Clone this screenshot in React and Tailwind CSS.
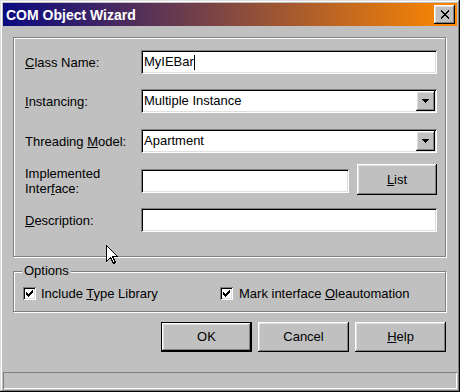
import React from "react";

const sunken =
  "shadow-[inset_1px_1px_0_#808080,inset_-1px_-1px_0_#ffffff,inset_2px_2px_0_#000000,inset_-2px_-2px_0_#dfdfdf]";
const raised =
  "shadow-[inset_-1px_-1px_0_#000000,inset_1px_1px_0_#ffffff,inset_-2px_-2px_0_#808080,inset_2px_2px_0_#dfdfdf]";
const etched = "border border-[#808080] shadow-[inset_1px_1px_0_#ffffff,1px_1px_0_#ffffff]";

const CHECK = [
  "......X",
  ".....XX",
  "X...XXX",
  "XX.XXX.",
  "XXXXX..",
  ".XXX...",
  "..X....",
];

function CheckMark() {
  const rects = [];
  CHECK.forEach((row, y) =>
    row.split("").forEach((c, x) => {
      if (c === "X") rects.push(<rect key={`${x}-${y}`} x={x} y={y} width="1" height="1" fill="#000" />);
    })
  );
  return (
    <svg width="7" height="7" viewBox="0 0 7 7" shapeRendering="crispEdges">
      {rects}
    </svg>
  );
}

function Checkbox() {
  return (
    <div className={`w-[13px] h-[13px] bg-white flex items-center justify-center shrink-0 ${sunken}`}>
      <CheckMark />
    </div>
  );
}

function Combo({ value }) {
  return (
    <div className={`w-[296px] h-[24px] bg-white flex items-center pl-[3px] ${sunken}`}>
      <span className="flex-1">{value}</span>
      <div className={`w-[19px] h-[20px] mr-[2px] bg-[#c0c0c0] flex items-center justify-center ${raised}`}>
        <svg width="7" height="4" viewBox="0 0 7 4" shapeRendering="crispEdges">
          <polygon points="0,0 7,0 3.5,4" fill="#000" />
        </svg>
      </div>
    </div>
  );
}

function Label({ children }) {
  return <div className="w-[116px] shrink-0 leading-[15px]">{children}</div>;
}

export default function App() {
  return (
    <div className="w-[460px] h-[392px] bg-[#c0c0c0] p-[3px] flex flex-col relative font-['Liberation_Sans',Arial,sans-serif] text-[13px] text-black shadow-[inset_-1px_-1px_0_#000000,inset_1px_1px_0_#dfdfdf,inset_-2px_-2px_0_#808080,inset_2px_2px_0_#ffffff]">
      {/* Title bar */}
      <div className="h-[23px] flex items-center pl-[3px] pr-[2px] bg-[linear-gradient(to_right,#0a0a80,#ff8800)]">
        <span className="flex-1 text-white font-bold text-[14px] leading-none">COM Object Wizard</span>
        <div className={`w-[21px] h-[19px] bg-[#c0c0c0] flex items-center justify-center ${raised}`}>
          <svg width="10" height="9" viewBox="0 0 10 9" shapeRendering="crispEdges">
            <path d="M1 0.5 L9 8.5 M9 0.5 L1 8.5" stroke="#000" strokeWidth="2" />
          </svg>
        </div>
      </div>

      {/* Main group */}
      <div className={`mt-[11px] ml-[10px] w-[433px] h-[220px] ${etched} flex flex-col pt-[12px] pl-[11px]`}>
        <div className="flex items-center h-[24px]">
          <Label>
            <u>C</u>lass Name:
          </Label>
          <div className={`w-[296px] h-[24px] bg-white flex items-center pl-[3px] ${sunken}`}>
            <span>MyIEBar</span>
            <span className="inline-block w-[1px] h-[15px] bg-black" />
          </div>
        </div>
        <div className="flex items-center h-[24px] mt-[15px]">
          <Label>
            <u>I</u>nstancing:
          </Label>
          <Combo value="Multiple Instance" />
        </div>
        <div className="flex items-center h-[24px] mt-[16px]">
          <Label>
            Threading <u>M</u>odel:
          </Label>
          <Combo value="Apartment" />
        </div>
        <div className="flex items-center h-[24px] mt-[16px]">
          <Label>
            Implemented
            <br />
            Inter<u>f</u>ace:
          </Label>
          <div className={`w-[208px] h-[24px] bg-white ${sunken}`} />
          <div
            className={`ml-[8px] w-[80px] h-[31px] self-start -mt-[5px] bg-[#c0c0c0] flex items-center justify-center ${raised}`}
          >
            <span>
              <u>L</u>ist
            </span>
          </div>
        </div>
        <div className="flex items-center h-[24px] mt-[15px]">
          <Label>
            <u>D</u>escription:
          </Label>
          <div className={`w-[296px] h-[24px] bg-white ${sunken}`} />
        </div>
      </div>

      {/* Options group */}
      <div className={`relative mt-[14px] ml-[10px] w-[433px] h-[41px] ${etched} flex items-start pt-[15px] pl-[9px]`}>
        <span className="absolute left-[8px] -top-[9px] px-[2px] bg-[#c0c0c0] leading-[15px]">Options</span>
        <div className="w-[197px] flex items-center gap-[5px]">
          <Checkbox />
          <span className="leading-[13px]">
            Include <u>T</u>ype Library
          </span>
        </div>
        <div className="flex items-center gap-[6px]">
          <Checkbox />
          <span className="leading-[13px]">
            Mark interface <u>O</u>leautomation
          </span>
        </div>
      </div>

      {/* Buttons */}
      <div className="mt-[10px] flex justify-end gap-[6px] pr-[11px]">
        <div className="w-[91px] h-[30px] border border-black">
          <div className={`w-full h-full bg-[#c0c0c0] flex items-center justify-center ${raised}`}>OK</div>
        </div>
        <div className={`w-[91px] h-[30px] bg-[#c0c0c0] flex items-center justify-center ${raised}`}>Cancel</div>
        <div className={`w-[91px] h-[30px] bg-[#c0c0c0] flex items-center justify-center ${raised}`}>
          <span>
            <u>H</u>elp
          </span>
        </div>
      </div>

      {/* Status bar */}
      <div className="mt-auto h-[17px] shadow-[inset_1px_1px_0_#808080,inset_-1px_-1px_0_#ffffff]" />

      {/* Mouse cursor */}
      <svg
        className="absolute left-[106px] top-[245px]"
        width="12"
        height="19"
        viewBox="0 0 12 19"
        shapeRendering="crispEdges"
      >
        <polygon
          points="0.5,0.5 0.5,16.5 4.5,12.5 7.5,18.5 9.5,17.5 6.5,11.5 11.5,11.5"
          fill="#fff"
          stroke="#000"
          strokeWidth="1"
        />
      </svg>
    </div>
  );
}
